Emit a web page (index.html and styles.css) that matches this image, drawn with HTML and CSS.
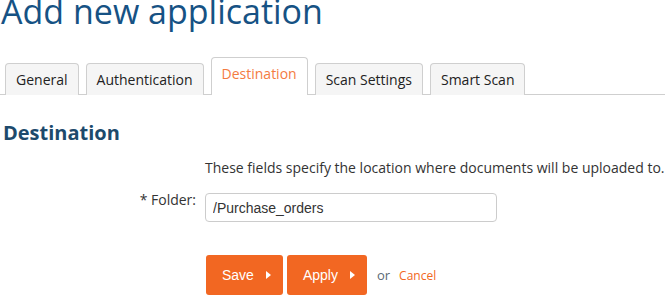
FILE: index.html
```html
<!DOCTYPE html>
<html lang="en">
<head>
    <meta charset="UTF-8">
    <title>Add new application</title>
    <link rel="stylesheet" href="styles.css">
</head>
<body>
    <h1 class="page-title">Add new application</h1>

    <ul class="tabs">
        <li class="tab">General</li>
        <li class="tab">Authentication</li>
        <li class="tab active">Destination</li>
        <li class="tab">Scan Settings</li>
        <li class="tab">Smart Scan</li>
    </ul>

    <h2 class="section-title">Destination</h2>

    <div class="form-row">
        <div class="form-label"></div>
        <div class="form-field">
            <p class="hint">These fields specify the location where documents will be uploaded to.</p>
        </div>
    </div>

    <div class="form-row">
        <label class="form-label" for="folder">* Folder:</label>
        <div class="form-field">
            <input class="text-input" id="folder" type="text" value="/Purchase_orders">
        </div>
    </div>

    <div class="form-row actions">
        <div class="form-label"></div>
        <div class="form-field buttons">
            <button class="btn">Save <span class="caret"></span></button>
            <button class="btn">Apply <span class="caret"></span></button>
            <span class="or">or</span>
            <a class="cancel" href="#">Cancel</a>
        </div>
    </div>
</body>
</html>
```

FILE: styles.css
```css
* {
    margin: 0;
    padding: 0;
    box-sizing: border-box;
}

body {
    font-family: "Open Sans", sans-serif;
    font-size: 14px;
    color: #333;
    background: white;
    overflow: hidden;
}

.page-title {
    font-size: 34px;
    font-weight: 400;
    line-height: 40px;
    margin-top: -9px;
    margin-left: 1px;
    color: #165284;
}

.tabs {
    list-style: none;
    display: flex;
    align-items: flex-end;
    gap: 7px;
    margin-top: 26px;
    padding-left: 5px;
    border-bottom: 1px solid #cfcfcf;
    height: 38px;
}

.tab {
    background: #f5f5f5;
    border: 1px solid #cfcfcf;
    border-bottom: none;
    border-radius: 4px 4px 0 0;
    padding: 6px 10px 6px;
    line-height: 19px;
    color: #222;
    margin-bottom: -1px;
}

.tab.active {
    background: white;
    color: #f47b3f;
    padding-bottom: 12px;
}

.section-title {
    font-size: 20px;
    font-weight: 700;
    color: #1d4a6c;
    margin: 24px 0 0 3px;
    line-height: 28px;
}

.form-row {
    display: flex;
    align-items: center;
}

.form-label {
    width: 196px;
    text-align: right;
    color: #333;
    flex-shrink: 0;
}

.form-field {
    margin-left: 9px;
}

.hint {
    margin-top: 11px;
    line-height: 19px;
    white-space: nowrap;
}

.text-input {
    margin-top: 16px;
    width: 292px;
    height: 29px;
    border: 1px solid #cccccc;
    border-radius: 4px;
    padding: 0 7px;
    font-family: "Liberation Sans", Arial, sans-serif;
    font-size: 14px;
    color: #333;
}

.actions {
    margin-top: 33px;
}

.buttons {
    display: flex;
    align-items: center;
    margin-left: 10px;
}

.btn {
    background: #f26722;
    color: white;
    border: none;
    border-radius: 3px;
    height: 40px;
    padding: 0 12px 0 16px;
    font-family: "Liberation Sans", Arial, sans-serif;
    font-size: 14px;
    margin-right: 4px;
    display: flex;
    align-items: center;
}

.caret {
    display: inline-block;
    width: 0;
    height: 0;
    margin-left: 12px;
    border-top: 4px solid transparent;
    border-bottom: 4px solid transparent;
    border-left: 5px solid white;
}

.or {
    margin-left: 6px;
    color: #5a6a75;
    font-size: 13px;
}

.cancel {
    margin-left: 9px;
    color: #f26722;
    font-size: 12px;
    text-decoration: none;
}
```
